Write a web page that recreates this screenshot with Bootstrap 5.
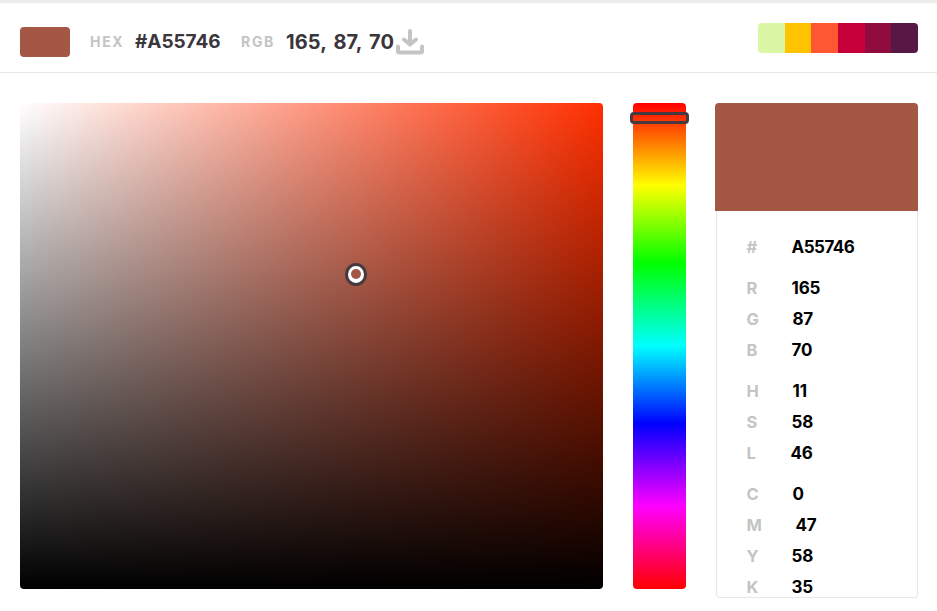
<!DOCTYPE html>
<html lang="en">
<head>
<meta charset="utf-8">
<meta name="viewport" content="width=device-width, initial-scale=1">
<title>Color picker</title>
<link href="https://cdn.jsdelivr.net/npm/bootstrap@5.3.0/dist/css/bootstrap.min.css" rel="stylesheet">
<style>
body{font-family:Inter,"Open Sans",sans-serif;font-weight:700;color:#3a363b;background:#fff;overflow:hidden}
.topbar{height:73px;border-top:3px solid #ececec;border-bottom:1px solid #e6e6e6;padding:0 19px 0 20px}
.chip{width:50px;height:30px;border-radius:4px;background:#a55746;margin-top:8px}
.tag{font-size:14px;letter-spacing:1.7px;color:#c4c4c4;line-height:30px;margin-top:9px}
.code{font-size:19px;line-height:30px;margin-top:9px;white-space:nowrap;font-weight:650}
.hexcode{width:106px;letter-spacing:-.05px}
.rgbcode{width:110px;font-size:20px;letter-spacing:.1px;word-spacing:2.2px}
.hextag{width:45px;margin-left:20px}
.rgbtag{width:45px}
.save{margin-top:8px}
.palette{width:160px;height:30px;border-radius:4px}
.picker{padding:30px 19px 0 20px}
.field{width:583px;height:486px;border-radius:4px;background:linear-gradient(to top,#000,transparent),linear-gradient(to right,#fff,#ff2f00)}
.knob{left:325px;top:160px;width:22px;height:23px;border-radius:50%;border:3px solid #463a40;background:#fff;padding:3px}
.knob span{width:10px;height:10px;border-radius:50%;background:#a55746}
.hues{width:53px;height:486px;margin-left:30px;border-radius:4px;background:linear-gradient(#f00,#ff0 17%,#0f0 33%,#0ff 50%,#00f 66%,#f0f 83%,#f00)}
.grip{left:-3px;top:9px;width:59px;height:12px;border:3px solid #463a40;border-radius:4px}
.info{width:203px;margin-left:29px}
.preview{height:108px;border-radius:4px 4px 0 0;background:#a55746}
.values{height:387px;margin-left:1px;border:1px solid #e6e6e6;border-top:0;border-radius:0 0 4px 4px;padding:21px 0 0 29.5px;font-size:17px;color:#000}
.entry{height:31px;line-height:31px}
.entry dt{width:45px;color:#c4c4c4;font-size:16.5px;font-weight:700}
.entry dd{margin:0;font-weight:650;letter-spacing:-.2px}
.entry:first-child dd{letter-spacing:-.5px}
.gap-row{margin-top:10px}
.in1{padding-left:1px}.in4{padding-left:4px}.out1{margin-left:-1px!important}
</style>
</head>
<body>
<header class="topbar d-flex align-items-center">
<div class="chip"></div>
<span class="tag hextag">HEX</span><span class="code hexcode">#A55746</span>
<span class="tag rgbtag">RGB</span><span class="code rgbcode">165, 87, 70</span>
<svg class="save" width="28" height="26" viewBox="0 0 28 26" fill="none" stroke="#c4c4c4" stroke-width="4" stroke-linecap="round" stroke-linejoin="round"><path d="M14 2V14M8 10.5l6 5 6-5"/><path d="M2 17.5V22q0 1.5 1.5 1.5H24.5Q26 23.5 26 22V17.5"/></svg>
<div class="palette d-flex overflow-hidden ms-auto">
<i class="flex-fill" style="background:#daf7a6"></i><i class="flex-fill" style="background:#ffc300"></i><i class="flex-fill" style="background:#ff5733"></i><i class="flex-fill" style="background:#c70039"></i><i class="flex-fill" style="background:#900c3f"></i><i class="flex-fill" style="background:#581845"></i>
</div>
</header>
<main class="picker d-flex align-items-start">
<div class="field position-relative"><div class="knob position-absolute d-flex"><span></span></div></div>
<div class="hues position-relative"><div class="grip position-absolute"></div></div>
<section class="info">
<div class="preview"></div>
<dl class="values mb-0">
<div class="entry d-flex"><dt>#</dt><dd>A55746</dd></div>
<div class="entry d-flex gap-row"><dt>R</dt><dd>165</dd></div>
<div class="entry d-flex"><dt>G</dt><dd class="in1">87</dd></div>
<div class="entry d-flex"><dt>B</dt><dd>70</dd></div>
<div class="entry d-flex gap-row"><dt>H</dt><dd class="in1">11</dd></div>
<div class="entry d-flex"><dt>S</dt><dd>58</dd></div>
<div class="entry d-flex"><dt>L</dt><dd class="out1">46</dd></div>
<div class="entry d-flex gap-row"><dt>C</dt><dd class="in1">0</dd></div>
<div class="entry d-flex"><dt>M</dt><dd class="in4">47</dd></div>
<div class="entry d-flex"><dt>Y</dt><dd>58</dd></div>
<div class="entry d-flex"><dt>K</dt><dd>35</dd></div>
</dl>
</section>
</main>
<script src="https://cdn.jsdelivr.net/npm/bootstrap@5.3.0/dist/js/bootstrap.bundle.min.js"></script>
</body>
</html>
